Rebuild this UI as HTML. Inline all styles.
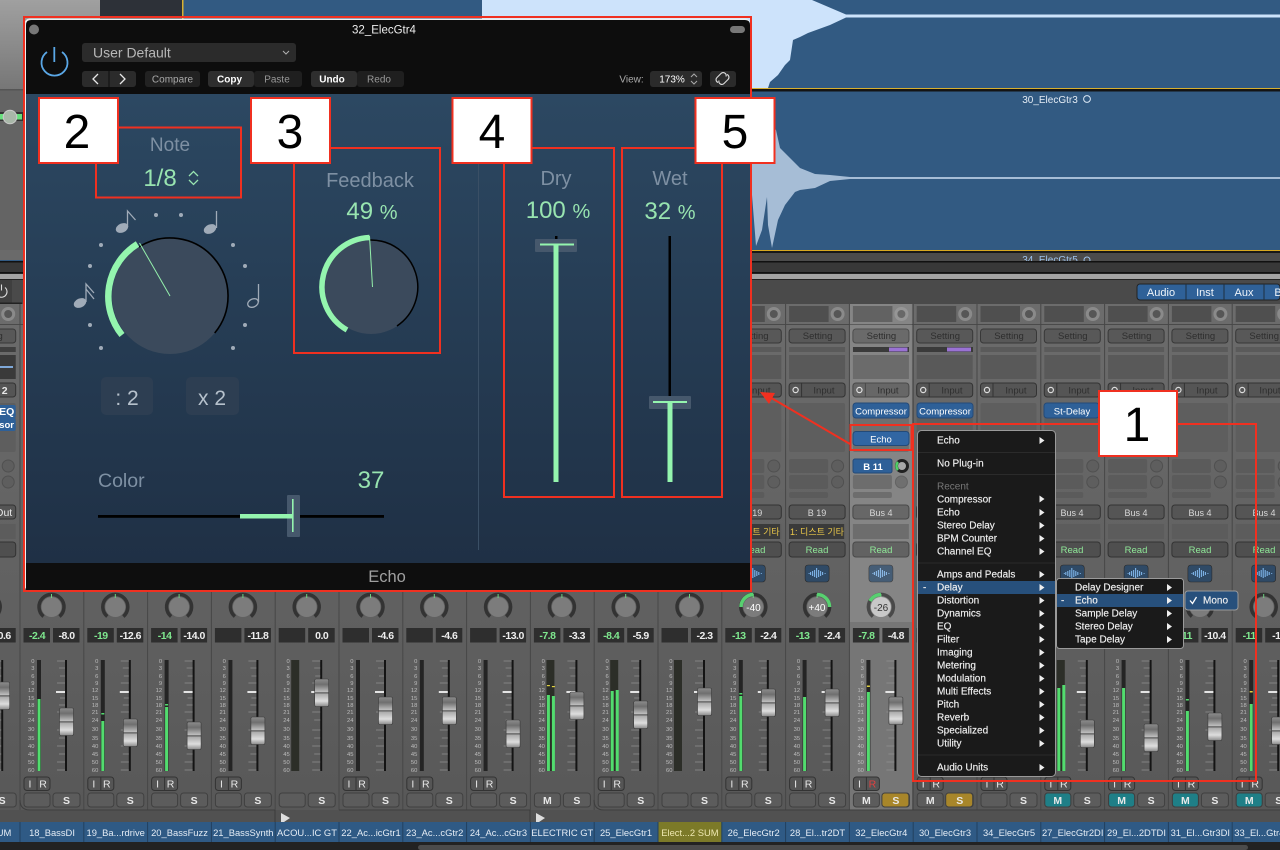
<!DOCTYPE html>
<html><head><meta charset="utf-8"><title>Echo</title>
<style>
html,body{margin:0;padding:0;background:#333;width:1280px;height:850px;overflow:hidden}
svg{display:block;font-family:"Liberation Sans","Noto Sans CJK KR",sans-serif}
.v{font-size:10.5px;fill:#eee;text-anchor:middle;font-weight:bold;letter-spacing:-.5px}
.g{font-size:10.5px;fill:#7fe88f;text-anchor:middle;font-weight:bold;letter-spacing:-.5px}
.b{font-size:9.5px;fill:#e6e6e6;text-anchor:middle}
.d{font-size:9.5px;fill:#2e2e2e;text-anchor:middle}
.l{font-size:9px;fill:#d8d8d8;text-anchor:middle}
.w{font-size:9.5px;fill:#fff;text-anchor:middle}
.n{font-size:9.4px;fill:#e4ecf5;text-anchor:middle}
.r{font-size:9.5px;fill:#8fe898;text-anchor:middle}
.s{font-size:10.5px;fill:#e8e8e8;text-anchor:middle;font-weight:bold}
.m{font-size:10px;fill:#f0f0f0;stroke:#f0f0f0;stroke-width:.15}
.p{fill:#7e90a3;font-size:19px;text-anchor:middle}
.q{fill:#98e4b0;font-size:24px;text-anchor:middle}
.k{fill:#c9c9c9;font-size:10px;text-anchor:middle}
.x{font-size:48px;fill:#000;text-anchor:middle}
</style></head><body>
<svg width="1280" height="850" viewBox="0 0 1280 850" xmlns="http://www.w3.org/2000/svg">
<defs>
<linearGradient id="gs" x1="0" y1="0" x2="0" y2="1"><stop offset="0" stop-color="#6c6c6c"/><stop offset="1" stop-color="#585858"/></linearGradient>
<linearGradient id="gp" x1="0" y1="0" x2="0" y2="1"><stop offset="0" stop-color="#2c4862"/><stop offset="1" stop-color="#1f3045"/></linearGradient>
<linearGradient id="gl" x1="0" y1="0" x2="0" y2="1"><stop offset="0" stop-color="#a0a0a0"/><stop offset="1" stop-color="#767676"/></linearGradient>
<linearGradient id="gc" x1="0" y1="0" x2="0" y2="1"><stop offset="0" stop-color="#8d8d8d"/><stop offset=".2" stop-color="#6f6f6f"/><stop offset=".48" stop-color="#c2c2c2"/><stop offset=".5" stop-color="#333"/><stop offset=".54" stop-color="#aaa"/><stop offset=".8" stop-color="#dedede"/><stop offset="1" stop-color="#8a8a8a"/></linearGradient>
<g id="c"><rect x="0" y="0" width="14" height="27.5" rx="1.5" fill="url(#gc)" stroke="#3a3a3a" stroke-width=".6"/></g>
<g id="sc" font-size="5.8" fill="#bdbdbd" text-anchor="end">
<text x="14.5" y="663">0</text><text x="14.5" y="670">3</text><text x="14.5" y="678">6</text><text x="14.5" y="685">9</text><text x="14.5" y="692">12</text><text x="14.5" y="700">15</text><text x="14.5" y="707">18</text><text x="14.5" y="714">21</text><text x="14.5" y="722">24</text><text x="14.5" y="731">30</text><text x="14.5" y="740">35</text><text x="14.5" y="748">40</text><text x="14.5" y="756">45</text><text x="14.5" y="764">50</text><text x="14.5" y="772">60</text>
</g>
<g id="st">
<rect x="3.5" y="306" width="39.5" height="16" fill="#4f4f4f"/><circle cx="52" cy="314" r="5.5" fill="#565656" stroke="#8a8a8a" stroke-width="3"/>
<rect x="3.5" y="329" width="56" height="14" rx="3" fill="#585858" stroke="#383838"/>
<rect x="3.5" y="347" width="56" height="5" fill="#5a5a5a"/>
<rect x="3.5" y="355" width="56" height="24" fill="#595959"/>
<rect x="3.5" y="383" width="56" height="14" rx="3" fill="#555" stroke="#333"/><circle cx="10" cy="390" r="2.6" fill="none" stroke="#ddd" stroke-width="1.2"/><path d="M16 383v14" stroke="#333"/>
<rect x="3.5" y="403" width="56" height="49" rx="2" fill="#5e5e5e"/>
<rect x="3.5" y="459" width="39" height="14" rx="2" fill="#5b5b5b"/><circle cx="52" cy="466" r="6" fill="#5e5e5e" stroke="#505050"/>
<rect x="3.5" y="475" width="39" height="14" rx="2" fill="#5b5b5b"/><circle cx="52" cy="482" r="6" fill="#5e5e5e" stroke="#505050"/>
<rect x="3.5" y="492" width="39" height="6" rx="2" fill="#5b5b5b"/>
<rect x="3.5" y="505" width="56" height="14" rx="3" fill="#555" stroke="#333"/>
<rect x="3.5" y="524" width="56" height="15" fill="#5c5c5c"/>
<rect x="3.5" y="542" width="56" height="15" rx="3" fill="#4f4f4f" stroke="#333"/>
<rect x="19.5" y="565" width="24" height="17" rx="3" fill="#2f4a66" stroke="#2a2a2a" stroke-width=".6"/>
<path d="M23 573.500h1M25 572v3M27 571v5M29 570v7M31 568v10M33 570v7M35 571v5M37 572v3M39 573.500h1" stroke="#7fb4e8" stroke-width="1.100"/>
<path d="M23.500 616.500A12.500 12.500 0 1 1 39.500 616.500" fill="none" stroke="#333" stroke-width="3.500"/>
<circle cx="31.500" cy="607" r="10" fill="#7c7c7c"/>
<path d="M31.500 594v4" stroke="#6ecf80"/>
<rect x="3.500" y="628" width="26.500" height="14.500" fill="#2e2e2e"/><rect x="33" y="628" width="26.500" height="14.500" fill="#2e2e2e"/>
<use href="#sc"/>
<rect x="45" y="660" width="2" height="111" fill="#141414"/>
<path d="M37 661h8M39 668h6M40 676h5M37 683h8M40 698h5M39 705h6M37 712h8M39 720h6M37 730h8M39 738h6M37 746h8M39 754h6M37 762h8M37 770h8" stroke="#909090" stroke-width=".8"/>
<path d="M36 692h9" stroke="#e4e4e4" stroke-width="2"/>
</g>
<g id="ir"><rect x="4" y="777" width="26" height="13.500" rx="3" fill="#555" stroke="#333"/><path d="M17 777v13.500" stroke="#333"/></g>
<g id="ms"><rect x="4" y="793" width="26" height="14" rx="3" fill="#5c5c5c" stroke="#404040"/><rect x="33" y="793" width="27" height="14" rx="3" fill="#5c5c5c" stroke="#404040"/></g>
<g id="mo"><rect x="17" y="660" width="4" height="111" fill="#242424"/></g>
<g id="mt"><rect x="16" y="660" width="8" height="111" fill="#2c2e28"/></g>
<path id="ar" d="M0 -3.500L5 0L0 3.500Z" fill="#eee"/>
</defs>

<!-- arrange area -->
<rect width="1280" height="270" fill="#325a82"/>
<rect x="0" y="0" width="100" height="90" fill="url(#gl)"/>
<rect x="100" y="0" width="83" height="88" fill="#2d3138"/>
<rect x="182" y="0" width="1.500" height="88" fill="#d8b030"/>
<rect x="0" y="90" width="100" height="170" fill="#646464"/>
<rect x="0" y="112" width="24" height="9" fill="#333"/><rect x="0" y="114" width="22" height="5.500" fill="#66e07c"/><circle cx="10" cy="117" r="6.800" fill="#a9b8a9" stroke="#ccc"/>
<rect x="0" y="250" width="100" height="10" fill="#6a6a6a"/>
<path d="M482 0H812L846 14.500H1280V17.500H846L830 25L808 33L800 37L793 40L790 60L785 65L778 75L770 82L768 88H740L482 60Z" fill="#cde3fb"/>
<path d="M752 100L776 130L780 148L790 158L800 168L815 174L830 175L850 177H1280V179H850L830 181L815 188L800 190L795 192L785 205L778 220L772 248L768 225L767 197L762 230L756 246L752 195Z" fill="#a6bdd6"/>
<rect x="100" y="88" width="1180" height="1.200" fill="#d8b030"/><rect x="100" y="89" width="1180" height="2.500" fill="#141414"/>
<rect x="0" y="89" width="100" height="1.500" fill="#555"/>
<rect x="100" y="250" width="1180" height="1.200" fill="#d8a820"/><rect x="100" y="251" width="1180" height="2" fill="#181818"/>
<rect x="100" y="253" width="1180" height="9" fill="#4b4b4b"/>
<text x="1050" y="263" font-size="10" fill="#9ec4ee" text-anchor="middle">34_ElecGtr5</text>
<circle cx="1087" cy="260" r="3" fill="none" stroke="#9ec4ee"/>
<rect x="0" y="262" width="1280" height="11" fill="#383838"/>
<rect x="0" y="261" width="1280" height="1.500" fill="#111"/>
<rect x="0" y="272" width="1280" height="1.500" fill="#111"/>
<rect x="0" y="274" width="1280" height="5" fill="#a3a3a3"/>
<rect x="0" y="279" width="1280" height="1.500" fill="#222"/>
<text x="1050" y="103" class="n" style="font-size:10px">30_ElecGtr3</text><circle cx="1087" cy="99" r="3.400" fill="none" stroke="#dce8f5"/>

<!-- mixer -->
<rect y="280" width="1280" height="24" fill="#4a4a4a"/>
<rect y="280" width="12" height="23" fill="#3f3f3f"/>
<rect y="302.500" width="22" height="1.500" fill="#222"/>
<path d="M-2 287.500A5.500 5.500 0 1 0 5 287.500M1.500 284.500v6" fill="none" stroke="#ddd" stroke-width="1.100"/>
<rect x="1137" y="284" width="143" height="16" rx="3" fill="#2f6198" stroke="#222"/>
<path d="M1186 284v16M1224 284v16M1264 284v16" stroke="#1e2e40"/>
<text x="1161" y="296" font-size="11" fill="#eef4fa" text-anchor="middle">Audio</text><text x="1205" y="296" font-size="11" fill="#eef4fa" text-anchor="middle">Inst</text><text x="1244" y="296" font-size="11" fill="#eef4fa" text-anchor="middle">Aux</text><text x="1278" y="296" font-size="11" fill="#eef4fa" text-anchor="middle">B</text>
<rect y="304" width="1280" height="506" fill="url(#gs)"/>
<rect x="849.500" y="304" width="62.500" height="506" fill="#767676"/>
<rect y="324" width="1280" height="1" fill="#4a4a4a"/>
<path d="M20 304V810M83.800 304V810M147.600 304V810M211.400 304V810M275.200 304V810M339 304V810M402.800 304V810M466.600 304V810M530.400 304V810M594.200 304V810M658 304V810M721.800 304V810M785.600 304V810M849.400 304V810M913.200 304V810M977 304V810M1040.800 304V810M1104.600 304V810M1168.400 304V810M1232.200 304V810" stroke="#474747" fill="none"/>
<rect y="810" width="1280" height="12" fill="#515151"/>
<path d="M20 800Q20 810 30 810H275M339 810H530M594 800Q594 810 604 810H1280" stroke="#3e3e3e" fill="none"/>
<path d="M275 810V822M530 810V822" stroke="#3a3a3a"/>
<path d="M281 814L290 819L281 825Z" transform="translate(0,-1)" fill="#ddd"/>
<path d="M536 814L545 819L536 825Z" transform="translate(0,-1)" fill="#ddd"/>

<!-- strip -1 -->
<g transform="translate(-43.800,0)"><use href="#st"/><use href="#ms"/><use href="#mo"/>
<rect x="3.500" y="347" width="56" height="5" fill="#3f3f3f"/><rect x="3.500" y="355" width="56" height="24" fill="#3a3a3a"/><rect x="43.800" y="366" width="13" height="2" fill="#7fa8d8"/>
<text x="48.500" y="394" class="s">2</text>
<rect x="3.500" y="405" width="56" height="13" rx="2" fill="#2e6098"/><rect x="3.500" y="418" width="56" height="13" rx="2" fill="#2e6098"/>
<text x="50.500" y="415" class="s" style="fill:#fff">EQ</text><text x="57.800" y="428" class="w" style="text-anchor:end;font-weight:bold">Compressor</text>
<text x="56" y="516" class="s" style="text-anchor:end;font-weight:normal">Bus Out</text>
<text x="46.500" y="639" class="v">-0.6</text>
<use href="#c" x="39.500" y="682"/><text x="46" y="804" class="s">S</text></g>

<!-- strip 0-10 lower -->
<g transform="translate(20,0)"><use href="#st"/><use href="#mo"/><rect x="17.500" y="699" width="3" height="72" fill="#52dc6e"/><use href="#ir"/><use href="#ms"/><use href="#c" x="39.500" y="708"/></g>
<g transform="translate(83.800,0)"><use href="#st"/><use href="#mo"/><rect x="17.500" y="721" width="3" height="50" fill="#52dc6e"/><rect x="17.500" y="713" width="3" height="1.500" fill="#52dc6e"/><use href="#ir"/><use href="#ms"/><use href="#c" x="39.500" y="719"/></g>
<g transform="translate(147.600,0)"><use href="#st"/><use href="#mo"/><rect x="17.500" y="707" width="3" height="64" fill="#52dc6e"/><rect x="17.500" y="704" width="3" height="1.500" fill="#52dc6e"/><use href="#ir"/><use href="#ms"/><use href="#c" x="39.500" y="722"/></g>
<g transform="translate(211.400,0)"><use href="#st"/><use href="#mo"/><use href="#ir"/><use href="#ms"/><use href="#c" x="39.500" y="717"/></g>
<g transform="translate(275.200,0)"><use href="#st"/><use href="#mt"/><use href="#ms"/><use href="#c" x="39.500" y="679"/></g>
<g transform="translate(339,0)"><use href="#st"/><use href="#mo"/><use href="#ir"/><use href="#ms"/><use href="#c" x="39.500" y="697"/></g>
<g transform="translate(402.800,0)"><use href="#st"/><use href="#mo"/><use href="#ir"/><use href="#ms"/><use href="#c" x="39.500" y="697"/></g>
<g transform="translate(466.600,0)"><use href="#st"/><use href="#mo"/><use href="#ir"/><use href="#ms"/><use href="#c" x="39.500" y="720"/></g>
<g transform="translate(530.400,0)"><use href="#st"/><use href="#mt"/><rect x="16.500" y="695" width="3" height="76" fill="#52dc6e"/><rect x="21.500" y="696" width="3" height="75" fill="#52dc6e"/><rect x="16.500" y="685" width="3" height="1.200" fill="#e0d040"/><rect x="21.500" y="686" width="3" height="1.200" fill="#e0d040"/><use href="#ms"/><use href="#c" x="39.500" y="692"/></g>
<g transform="translate(594.200,0)"><use href="#st"/><use href="#mt"/><rect x="16.500" y="691" width="3" height="80" fill="#52dc6e"/><rect x="21.500" y="690" width="3" height="81" fill="#52dc6e"/><use href="#ir"/><use href="#ms"/><use href="#c" x="39.500" y="701"/></g>
<g transform="translate(658,0)"><use href="#st"/><use href="#mt"/><use href="#ms"/><use href="#c" x="39.500" y="688"/></g>
<g transform="translate(721.800,0)"><use href="#st"/><use href="#mo"/><rect x="17.500" y="696" width="3" height="75" fill="#52dc6e"/><rect x="17.500" y="693" width="3" height="1.500" fill="#52dc6e"/><use href="#ir"/><use href="#ms"/><use href="#c" x="39.500" y="689"/></g>
<g transform="translate(785.600,0)"><use href="#st"/><use href="#mo"/><rect x="17.500" y="697" width="3" height="74" fill="#52dc6e"/><use href="#ir"/><use href="#ms"/><use href="#c" x="39.500" y="689"/></g>
<g transform="translate(849.400,0)"><use href="#st"/><rect x="0.500" y="304" width="62" height="318" fill="#fff" opacity=".11"/><use href="#mo"/><rect x="17.500" y="692" width="3" height="79" fill="#52dc6e"/><rect x="17.500" y="685.500" width="3" height="1.500" fill="#e0d040"/><use href="#ir"/><use href="#ms"/><use href="#c" x="39.500" y="697"/></g>
<g transform="translate(913.200,0)"><use href="#st"/><use href="#mo"/><use href="#ir"/><use href="#ms"/><use href="#c" x="39.500" y="700"/></g>
<g transform="translate(977,0)"><use href="#st"/><use href="#mo"/><use href="#ir"/><use href="#ms"/><use href="#c" x="39.500" y="700"/></g>
<g transform="translate(1040.800,0)"><use href="#st"/><use href="#mt"/><rect x="16.500" y="688" width="3" height="83" fill="#52dc6e"/><rect x="21.500" y="685" width="3" height="86" fill="#52dc6e"/><use href="#ir"/><use href="#ms"/><use href="#c" x="39.500" y="720"/></g>
<g transform="translate(1104.600,0)"><use href="#st"/><use href="#mo"/><rect x="17.500" y="688" width="3" height="83" fill="#52dc6e"/><use href="#ir"/><use href="#ms"/><use href="#c" x="39.500" y="724"/></g>
<g transform="translate(1168.400,0)"><use href="#st"/><use href="#mo"/><rect x="17.500" y="711" width="3" height="60" fill="#52dc6e"/><rect x="17.500" y="699" width="3" height="1.500" fill="#52dc6e"/><use href="#ir"/><use href="#ms"/><use href="#c" x="39.500" y="713"/></g>
<g transform="translate(1232.200,0)"><use href="#st"/><use href="#mo"/><rect x="17.500" y="704" width="3" height="67" fill="#52dc6e"/><rect x="17.500" y="691" width="3" height="1.500" fill="#e0d040"/><use href="#ir"/><use href="#ms"/><use href="#c" x="39.500" y="717"/></g>

<!-- values -->
<g>
<text x="37" y="639" class="g">-2.4</text><text x="66.500" y="639" class="v">-8.0</text>
<text x="100.800" y="639" class="g">-19</text><text x="130.300" y="639" class="v">-12.6</text>
<text x="164.600" y="639" class="g">-14</text><text x="194.100" y="639" class="v">-14.0</text>
<text x="257.900" y="639" class="v">-11.8</text>
<text x="321.700" y="639" class="v">0.0</text>
<text x="385.500" y="639" class="v">-4.6</text>
<text x="449.300" y="639" class="v">-4.6</text>
<text x="513.100" y="639" class="v">-13.0</text>
<text x="547.400" y="639" class="g">-7.8</text><text x="576.900" y="639" class="v">-3.3</text>
<text x="611.200" y="639" class="g">-8.4</text><text x="640.700" y="639" class="v">-5.9</text>
<text x="704.500" y="639" class="v">-2.3</text>
<text x="738.800" y="639" class="g">-13</text><text x="768.300" y="639" class="v">-2.4</text>
<text x="802.600" y="639" class="g">-13</text><text x="832.100" y="639" class="v">-2.4</text>
<text x="866.400" y="639" class="g">-7.8</text><text x="895.900" y="639" class="v">-4.8</text>
<text x="1185.400" y="639" class="g">-11</text><text x="1214.900" y="639" class="v">-10.4</text>
<text x="1249.200" y="639" class="g">-11</text><text x="1278.700" y="639" class="v">-11</text>
</g>

<!-- upper strip content -->
<g>
<text x="-12" y="339" class="d">Setting</text>
<text x="753.800" y="339" class="d">Setting</text><text x="817.600" y="339" class="d">Setting</text><text x="881.400" y="339" class="d">Setting</text><text x="945.200" y="339" class="d">Setting</text><text x="1009" y="339" class="d">Setting</text><text x="1072.800" y="339" class="d">Setting</text><text x="1136.600" y="339" class="d">Setting</text><text x="1200.400" y="339" class="d">Setting</text><text x="1264.200" y="339" class="d">Setting</text>
<text x="760" y="393.500" class="d">Input</text><text x="824" y="393.500" class="d">Input</text><text x="888" y="393.500" class="d">Input</text><text x="952" y="393.500" class="d">Input</text><text x="1016" y="393.500" class="d">Input</text><text x="1079" y="393.500" class="d">Input</text><text x="1143" y="393.500" class="d">Input</text><text x="1207" y="393.500" class="d">Input</text><text x="1270" y="393.500" class="d">Input</text>
<rect x="853" y="347" width="56" height="5" fill="#3a3a3a"/><rect x="889" y="347.500" width="18.500" height="4" fill="#9a72d4"/>
<rect x="917" y="347" width="56" height="5" fill="#3a3a3a"/><rect x="947" y="347.500" width="24" height="4" fill="#9a72d4"/>
<rect x="853" y="403" width="56" height="15" rx="3" fill="#2e6098" stroke="#244a78"/><text x="881" y="414.500" class="w">Compressor</text>
<rect x="917" y="403" width="56" height="15" rx="3" fill="#2e6098" stroke="#244a78"/><text x="945" y="414.500" class="w">Compressor</text>
<rect x="1044" y="403" width="55" height="15" rx="3" fill="#2e6098" stroke="#244a78"/><text x="1072" y="414.500" class="w">St-Delay</text>
<rect x="853" y="431.500" width="56" height="14" rx="3" fill="#3166a3" stroke="#234a78"/><text x="881" y="442.500" class="w">Echo</text>
<rect x="853" y="459" width="39" height="14" rx="2" fill="#2e6098" stroke="#244a78"/><text x="873" y="470" class="w" font-weight="bold">B 11</text>
<circle cx="902" cy="466" r="5.500" fill="#a8a8a8" stroke="#222" stroke-width="3"/><path d="M898 462A6 6 0 0 0 898 470" fill="none" stroke="#50d068" stroke-width="2.500"/>
<text x="753" y="516" class="l">B 19</text><text x="817" y="516" class="l">B 19</text><text x="881" y="516" class="l">Bus 4</text><text x="1072" y="516" class="l">Bus 4</text><text x="1136" y="516" class="l">Bus 4</text><text x="1200" y="516" class="l">Bus 4</text><text x="1264" y="516" class="l">Bus 4</text>
<rect x="752" y="524" width="28" height="15" fill="#3a3a3a"/><text x="766" y="535" font-size="9" fill="#ecc94a" text-anchor="middle">트 기타</text>
<rect x="789" y="524" width="55" height="15" fill="#3a3a3a"/><text x="817" y="535" font-size="9" fill="#ecc94a" text-anchor="middle">1: 디스트 기타</text>
<text x="754" y="553" class="r">Read</text><text x="817" y="553" class="r">Read</text><text x="881" y="553" class="r">Read</text><text x="1072" y="553" class="r">Read</text><text x="1136" y="553" class="r">Read</text><text x="1200" y="553" class="r">Read</text><text x="1264" y="553" class="r">Read</text>
</g>

<!-- special knobs -->
<path d="M741 607A12.500 12.500 0 0 1 753.300 594.500" fill="none" stroke="#58d070" stroke-width="3.500"/><text x="753.500" y="611" font-size="10" fill="#fff" text-anchor="middle">-40</text>
<path d="M817.100 594.500A12.500 12.500 0 0 1 829.600 607" fill="none" stroke="#58d070" stroke-width="3.500"/><text x="817" y="611" font-size="10" fill="#fff" text-anchor="middle">+40</text>
<circle cx="880.900" cy="607" r="10" fill="#c8c8c8"/><path d="M870 601A12.500 12.500 0 0 1 880.900 594.500" fill="none" stroke="#58d070" stroke-width="3.500"/><text x="881" y="611" font-size="10" fill="#333" text-anchor="middle">-26</text>

<!-- I R M S labels -->
<g font-size="10.500" fill="#e8e8e8" text-anchor="middle">
<text x="30" y="787.500">I</text><text x="43" y="787.500">R</text>
<text x="93.800" y="787.500">I</text><text x="106.800" y="787.500">R</text>
<text x="157.600" y="787.500">I</text><text x="170.600" y="787.500">R</text>
<text x="221.400" y="787.500">I</text><text x="234.400" y="787.500">R</text>
<text x="349" y="787.500">I</text><text x="362" y="787.500">R</text>
<text x="412.800" y="787.500">I</text><text x="425.800" y="787.500">R</text>
<text x="476.600" y="787.500">I</text><text x="489.600" y="787.500">R</text>
<text x="604.200" y="787.500">I</text><text x="617.200" y="787.500">R</text>
<text x="731.800" y="787.500">I</text><text x="744.800" y="787.500">R</text>
<text x="795.600" y="787.500">I</text><text x="808.600" y="787.500">R</text>
<text x="859.400" y="787.500">I</text><text x="872.400" y="787.500" fill="#e04040">R</text>
<text x="923.200" y="787.500">I</text><text x="936.200" y="787.500">R</text>
<text x="987" y="787.500">I</text><text x="1000" y="787.500">R</text>
<text x="1050.800" y="787.500">I</text><text x="1063.800" y="787.500">R</text>
<text x="1114.600" y="787.500">I</text><text x="1127.600" y="787.500">R</text>
<text x="1178.400" y="787.500">I</text><text x="1191.400" y="787.500">R</text>
<text x="1242.200" y="787.500">I</text><text x="1255.200" y="787.500">R</text>
</g>
<rect x="881.900" y="793" width="27" height="14" rx="3" fill="#a8862a" stroke="#404040"/>
<rect x="945.700" y="793" width="27" height="14" rx="3" fill="#a8862a" stroke="#404040"/>
<rect x="1044.800" y="793" width="26" height="14" rx="3" fill="#1f7f87" stroke="#404040"/>
<rect x="1108.600" y="793" width="26" height="14" rx="3" fill="#1f7f87" stroke="#404040"/>
<rect x="1172.400" y="793" width="26" height="14" rx="3" fill="#1f7f87" stroke="#404040"/>
<rect x="1236.200" y="793" width="26" height="14" rx="3" fill="#1f7f87" stroke="#404040"/>
<g>
<text x="66.500" y="804" class="s">S</text><text x="130.300" y="804" class="s">S</text><text x="194.100" y="804" class="s">S</text><text x="257.900" y="804" class="s">S</text><text x="321.700" y="804" class="s">S</text><text x="385.500" y="804" class="s">S</text><text x="449.300" y="804" class="s">S</text><text x="513.100" y="804" class="s">S</text><text x="576.900" y="804" class="s">S</text><text x="640.700" y="804" class="s">S</text><text x="704.500" y="804" class="s">S</text><text x="768.300" y="804" class="s">S</text><text x="832.100" y="804" class="s">S</text><text x="895.900" y="804" class="s">S</text><text x="959.700" y="804" class="s">S</text><text x="1023.500" y="804" class="s">S</text><text x="1087.300" y="804" class="s">S</text><text x="1151.100" y="804" class="s">S</text><text x="1214.900" y="804" class="s">S</text><text x="1278.700" y="804" class="s">S</text>
<text x="547.400" y="804" class="s">M</text><text x="866.400" y="804" class="s">M</text><text x="930.200" y="804" class="s">M</text><text x="1057.800" y="804" class="s">M</text><text x="1121.600" y="804" class="s">M</text><text x="1185.400" y="804" class="s">M</text><text x="1249.200" y="804" class="s">M</text>
</g>

<!-- name bar -->
<rect y="822" width="1280" height="20" fill="#2f5a85"/>
<rect x="658" y="822" width="63.800" height="20" fill="#7c7a28"/>
<path d="M20 822v20M83.800 822v20M147.600 822v20M211.400 822v20M275.200 822v20M339 822v20M402.800 822v20M466.600 822v20M530.400 822v20M594.200 822v20M658 822v20M721.800 822v20M785.600 822v20M849.400 822v20M913.200 822v20M977 822v20M1040.800 822v20M1104.600 822v20M1168.400 822v20M1232.200 822v20" stroke="#22405f"/>
<g>
<text x="4" y="836" class="n">UM</text><text x="52" y="836" class="n">18_BassDI</text><text x="115.700" y="836" class="n">19_Ba...rdrive</text><text x="179.500" y="836" class="n">20_BassFuzz</text><text x="243.300" y="836" class="n">21_BassSynth</text><text x="307" y="836" class="n">ACOU...IC GT</text><text x="371" y="836" class="n">22_Ac...icGtr1</text><text x="434.700" y="836" class="n">23_Ac...cGtr2</text><text x="498.500" y="836" class="n">24_Ac...cGtr3</text><text x="562.300" y="836" class="n">ELECTRIC GT</text><text x="626" y="836" class="n">25_ElecGtr1</text><text x="689.900" y="836" class="n" style="fill:#eee8b0">Elect...2 SUM</text><text x="753.700" y="836" class="n">26_ElecGtr2</text><text x="817.500" y="836" class="n">28_El...tr2DT</text><text x="881.300" y="836" class="n">32_ElecGtr4</text><text x="945" y="836" class="n">30_ElecGtr3</text><text x="1009" y="836" class="n">34_ElecGtr5</text><text x="1072.700" y="836" class="n">27_ElecGtr2DI</text><text x="1136.500" y="836" class="n">29_El...2DTDI</text><text x="1200.300" y="836" class="n">31_El...Gtr3DI</text><text x="1264" y="836" class="n">33_El...Gtr4DI</text>
</g>
<rect y="842" width="1280" height="8" fill="#222"/>
<rect x="418" y="845" width="830" height="5" rx="2.500" fill="#4b4b4b"/>

<!-- plugin window -->
<rect x="24.500" y="18.500" width="725.500" height="572" rx="5" fill="#eee"/>
<path d="M26 25Q26 20 31 20H745Q750 20 750 25V94H26Z" fill="#0d0d0d"/>
<rect x="26" y="94" width="724" height="469" fill="url(#gp)"/>
<rect x="26" y="563" width="724" height="27" fill="#0e0e0e"/>
<circle cx="34" cy="29.500" r="5" fill="#777"/>
<rect x="730" y="26" width="15" height="7" rx="3.500" fill="#777"/>
<text x="384" y="33.500" font-size="11.500" fill="#eee" text-anchor="middle">32_ElecGtr4</text>
<path d="M47 52A13 13 0 1 0 62 52" fill="none" stroke="#5aa7e6" stroke-width="1.800"/><path d="M54.300 47v15" stroke="#5aa7e6" stroke-width="1.800"/>
<rect x="82" y="43" width="214" height="19" rx="3" fill="#2b2b2b"/>
<text x="93" y="57.500" font-size="14" fill="#b8b8b8">User Default</text>
<path d="M283 51l3 3 3-3" fill="none" stroke="#b0b0b0"/>
<rect x="82" y="71" width="54" height="16" rx="3" fill="#2b2b2b"/><path d="M109 71v16" stroke="#0d0d0d"/>
<path d="M98 74l-5 5 5 5M120 74l5 5-5 5" fill="none" stroke="#e8e8e8" stroke-width="1.300"/>
<rect x="145" y="71" width="55" height="16" rx="3" fill="#222"/><text x="172.500" y="82.500" class="k" style="fill:#aaa">Compare</text>
<rect x="208" y="71" width="46" height="16" rx="3" fill="#2e2e2e"/><rect x="254" y="71" width="48" height="16" rx="3" fill="#1f1f1f"/>
<text x="229.500" y="82.500" class="k" style="fill:#fff;font-weight:bold">Copy</text><text x="277" y="82.500" class="k" style="fill:#999">Paste</text>
<rect x="311" y="71" width="46" height="16" rx="3" fill="#2e2e2e"/><rect x="357" y="71" width="47" height="16" rx="3" fill="#1f1f1f"/>
<text x="332" y="82.500" class="k" style="fill:#fff;font-weight:bold">Undo</text><text x="379" y="82.500" class="k" style="fill:#999">Redo</text>
<text x="631.500" y="82.500" class="k" style="fill:#aaa">View:</text>
<rect x="650" y="71" width="52" height="16" rx="3" fill="#2b2b2b"/><text x="672" y="82.500" class="k" style="fill:#fff">173%</text><path d="M691 77l3-3 3 3M691 81l3 3 3-3" fill="none" stroke="#aaa"/>
<rect x="710" y="71" width="26" height="16" rx="3" fill="#2b2b2b"/>
<path d="M718 83a3 3 0 0 1-1-5l4-4a3 3 0 0 1 5 3M727 75a3 3 0 0 1 1 5l-4 4a3 3 0 0 1-5-3" fill="none" stroke="#ddd" stroke-width="1.100" transform="translate(0,-.5)"/>

<!-- Note -->
<text x="170" y="151" class="p">Note</text>
<text x="160" y="186" class="q">1/8</text>
<path d="M189 176l4.500-4.500 4.500 4.500M189 180l4.500 4.500 4.500-4.500" fill="none" stroke="#98e4b0" stroke-width="1.300"/>
<!-- big knob -->
<circle cx="170" cy="296" r="58" fill="#3b4a5c"/>
<path d="M139 247A58 58 0 0 1 214.700 333" fill="none" stroke="#000" stroke-width="1.600"/>
<path d="M122 335A61.500 61.500 0 0 1 137.500 244" fill="none" stroke="#94f5ae" stroke-width="6.500"/>
<path d="M170 296L139.500 243" stroke="#94f0ac" stroke-width="1"/>
<g fill="#a0abb8"><circle cx="156" cy="215" r="2"/><circle cx="181" cy="215" r="2"/><circle cx="101" cy="245" r="2"/><circle cx="233" cy="245" r="2"/><circle cx="90" cy="266" r="2"/><circle cx="245" cy="266" r="2"/><circle cx="90" cy="325" r="2"/><circle cx="245" cy="325" r="2"/><circle cx="101" cy="348" r="2"/><circle cx="233" cy="348" r="2"/>
<ellipse cx="122" cy="228" rx="6.500" ry="4.500" transform="rotate(-25 122 228)"/><ellipse cx="210" cy="229" rx="6.500" ry="4.500" transform="rotate(-25 210 229)"/><ellipse cx="80" cy="303" rx="6.500" ry="4.500" transform="rotate(-25 80 303)"/></g>
<path d="M127.500 227V211L135.500 220M216.500 228V211M86 302V284L94 293M86 289L94 299" fill="none" stroke="#a0abb8" stroke-width="1.300"/>
<ellipse cx="253" cy="303" rx="5.500" ry="4" transform="rotate(-25 253 303)" fill="none" stroke="#a0abb8" stroke-width="1.300"/><path d="M258.500 284V302" stroke="#a0abb8" stroke-width="1.300"/>
<rect x="101" y="377" width="52" height="38" rx="5" fill="#2d3e52"/><rect x="186" y="377" width="53" height="38" rx="5" fill="#2d3e52"/>
<text x="127" y="405" font-size="21" fill="#b6c1cc" text-anchor="middle">: 2</text><text x="212" y="405" font-size="21" fill="#b6c1cc" text-anchor="middle">x 2</text>
<!-- color -->
<text x="98" y="487" font-size="19.500" fill="#7e90a3">Color</text>
<text x="371" y="488" class="q">37</text>
<rect x="98" y="515" width="286" height="2.800" fill="#000"/>
<rect x="287" y="495" width="13" height="42" rx="1" fill="#46586c"/>
<rect x="240" y="514" width="53" height="4.500" fill="#94f5ae"/>
<rect x="292" y="499" width="1.600" height="33" fill="#94f5ae"/>
<!-- feedback -->
<text x="370" y="187" class="p" style="font-size:20px">Feedback</text>
<text x="372" y="219" class="q">49 <tspan font-size="20">%</tspan></text>
<circle cx="371" cy="287" r="47" fill="#3b4a5c"/>
<path d="M370 240A47 47 0 0 1 397 326" fill="none" stroke="#000" stroke-width="1.500"/>
<path d="M347 330A49.500 49.500 0 0 1 369.500 237.500" fill="none" stroke="#94f5ae" stroke-width="5.500"/>
<path d="M369.500 236L372.500 287" stroke="#94f0ac" stroke-width="1"/>
<path d="M478.500 164V550" stroke="#3a4f65"/>
<!-- dry -->
<text x="556" y="185" class="p" style="font-size:20px">Dry</text>
<text x="558" y="218" class="q">100 <tspan font-size="20">%</tspan></text>
<rect x="555" y="236" width="2.500" height="246" fill="#000"/>
<rect x="535" y="239" width="42" height="13" rx="1" fill="#46586c"/>
<rect x="553.500" y="245" width="5" height="237" fill="#94f5ae"/>
<rect x="540" y="243.500" width="34" height="2" fill="#94f5ae"/>
<!-- wet -->
<text x="670" y="185" class="p" style="font-size:20px">Wet</text>
<text x="670" y="219" class="q">32 <tspan font-size="20">%</tspan></text>
<rect x="668.500" y="236" width="2.500" height="246" fill="#000"/>
<rect x="649" y="396" width="42" height="13" rx="1" fill="#46586c"/>
<rect x="667.500" y="403" width="5" height="79" fill="#94f5ae"/>
<rect x="653" y="401" width="34" height="2" fill="#94f5ae"/>
<text x="387" y="582" font-size="16.500" fill="#a0a0a0" text-anchor="middle">Echo</text>

<!-- menu -->
<rect x="917.500" y="430.500" width="138" height="346" rx="4" fill="#1a1a1a" stroke="#9a9a9a"/>
<path d="M918 452.500H1055M918 474.500H1055M918 563H1055M918 755H1055" stroke="#2b2b2b"/>
<rect x="918" y="581" width="137" height="13" fill="#27507c"/>
<g class="m">
<text x="937" y="443.500">Echo</text><text x="937" y="466.500">No Plug-in</text><text x="937" y="489.500" style="fill:#777;stroke:none">Recent</text><text x="937" y="502.500">Compressor</text><text x="937" y="515.500">Echo</text><text x="937" y="528.500">Stereo Delay</text><text x="937" y="541.500">BPM Counter</text><text x="937" y="554.500">Channel EQ</text><text x="937" y="577.500">Amps and Pedals</text><text x="923" y="590.500">-</text><text x="937" y="590.500">Delay</text><text x="937" y="603.500">Distortion</text><text x="937" y="616.500">Dynamics</text><text x="937" y="629.500">EQ</text><text x="937" y="642.500">Filter</text><text x="937" y="655.500">Imaging</text><text x="937" y="668.500">Metering</text><text x="937" y="681.500">Modulation</text><text x="937" y="694.500">Multi Effects</text><text x="937" y="707.500">Pitch</text><text x="937" y="720.500">Reverb</text><text x="937" y="733.500">Specialized</text><text x="937" y="746.500">Utility</text><text x="937" y="770.500">Audio Units</text>
</g>
<g>
<use href="#ar" x="1039.500" y="440.500"/><use href="#ar" x="1039.500" y="499"/><use href="#ar" x="1039.500" y="512.500"/><use href="#ar" x="1039.500" y="525.500"/><use href="#ar" x="1039.500" y="538.500"/><use href="#ar" x="1039.500" y="551.500"/><use href="#ar" x="1039.500" y="574.500"/><use href="#ar" x="1039.500" y="587.500"/><use href="#ar" x="1039.500" y="600.500"/><use href="#ar" x="1039.500" y="613.500"/><use href="#ar" x="1039.500" y="626.500"/><use href="#ar" x="1039.500" y="639.500"/><use href="#ar" x="1039.500" y="652.500"/><use href="#ar" x="1039.500" y="665.500"/><use href="#ar" x="1039.500" y="678.500"/><use href="#ar" x="1039.500" y="691.500"/><use href="#ar" x="1039.500" y="704.500"/><use href="#ar" x="1039.500" y="717.500"/><use href="#ar" x="1039.500" y="730.500"/><use href="#ar" x="1039.500" y="743.500"/><use href="#ar" x="1039.500" y="767.500"/>
</g>
<rect x="1056.500" y="578.500" width="127" height="70" rx="3" fill="#1a1a1a" stroke="#9a9a9a"/>
<rect x="1057" y="594" width="126" height="13" fill="#27507c"/>
<g class="m">
<text x="1075" y="590.500">Delay Designer</text><text x="1061" y="603.500">-</text><text x="1075" y="603.500">Echo</text><text x="1075" y="616.500">Sample Delay</text><text x="1075" y="629.500">Stereo Delay</text><text x="1075" y="642.500">Tape Delay</text>
</g>
<use href="#ar" x="1167" y="587.500"/><use href="#ar" x="1167" y="600.500"/><use href="#ar" x="1167" y="613.500"/><use href="#ar" x="1167" y="626.500"/><use href="#ar" x="1167" y="639.500"/>
<rect x="1185" y="591" width="53" height="19" rx="3" fill="#27507c" stroke="#9a9a9a"/>
<text x="1203" y="603.500" class="m">Mono</text><path d="M1190 600.500l2.500 3 4-6.500" fill="none" stroke="#fff" stroke-width="1.300"/>

<!-- red annotations -->
<g fill="none" stroke="#f03020" stroke-width="2">
<rect x="24" y="17" width="727" height="574"/>
<rect x="96" y="127.500" width="145" height="70"/>
<rect x="294" y="148" width="146" height="205"/>
<rect x="504" y="148" width="110" height="349"/>
<rect x="622" y="148" width="100" height="349"/>
<rect x="913" y="424" width="343" height="357"/>
<rect x="850.500" y="425" width="61" height="25"/>
<path d="M850 444L768 396"/>
</g>
<path d="M760 392L775 393L769 404Z" fill="#f03020"/>
<g fill="#fff" stroke="#f03020" stroke-width="2">
<rect x="39" y="98" width="79" height="65"/><rect x="251" y="98" width="79" height="65"/><rect x="452.500" y="98" width="79" height="65"/><rect x="695.500" y="98" width="79" height="65"/><rect x="1099" y="391" width="78" height="65"/>
</g>
<text x="77" y="148" class="x">2</text><text x="290" y="148" class="x">3</text><text x="492" y="148" class="x">4</text><text x="735" y="148" class="x">5</text><text x="1137" y="441" class="x">1</text>
</svg>
</body></html>
